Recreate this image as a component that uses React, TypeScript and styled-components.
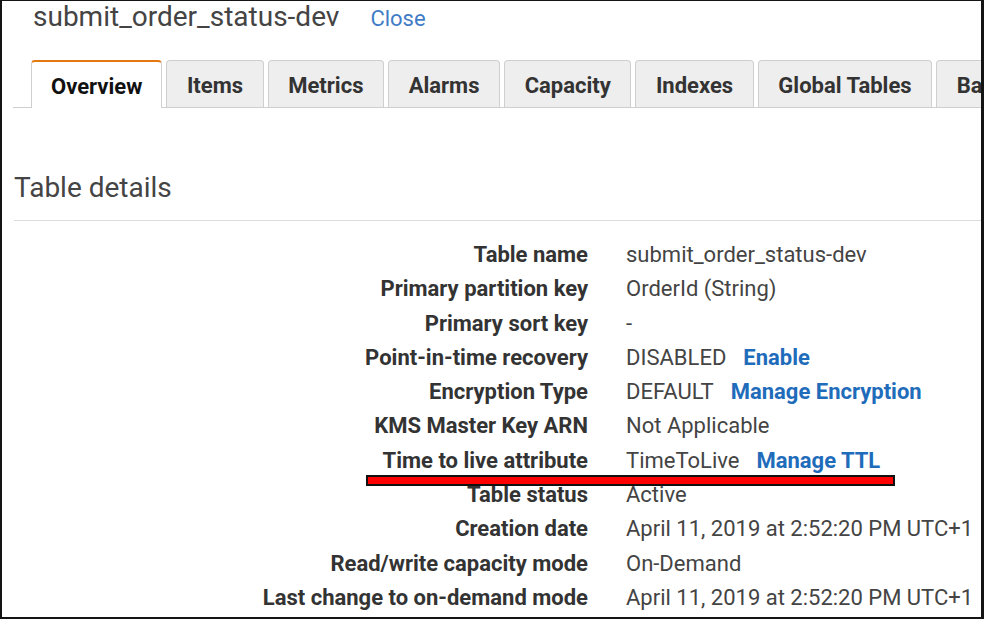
import React from 'react';
import styled, { createGlobalStyle } from 'styled-components';

const GlobalStyle = createGlobalStyle`
  html, body {
    margin: 0;
    padding: 0;
    background: #ffffff;
  }
  body {
    font-family: Roboto, 'Liberation Sans', Arial, sans-serif;
  }
`;

const Frame = styled.div`
  position: relative;
  box-sizing: border-box;
  width: 984px;
  height: 619px;
  border: 2px solid #141414;
  border-top-width: 1px;
  border-right-width: 3px;
  overflow: hidden;
  background: #fff;
`;

const Header = styled.div`
  display: flex;
  align-items: baseline;
  gap: 31px;
  height: 30px;
  padding-left: 31px;
  padding-top: 1px;
  line-height: 30px;
`;

const Title = styled.h1`
  margin: 0;
  font-size: 28px;
  font-weight: 400;
  line-height: 30px;
  color: #444;
`;

const CloseLink = styled.a`
  font-size: 22px;
  line-height: 30px;
  color: #3f7cc6;
  cursor: pointer;
`;

const Body = styled.div`
  padding-left: 11px;
`;

const TabBar = styled.div`
  display: flex;
  gap: 4px;
  margin-top: 28px;
  padding-left: 18px;
  height: 47px;
  border-bottom: 1px solid #cfcfcf;
  white-space: nowrap;
`;

const Tab = styled.div<{ active?: boolean }>`
  box-sizing: border-box;
  flex: none;
  display: flex;
  align-items: center;
  height: ${(p) => (p.active ? '48px' : '47px')};
  padding: 3px ${(p) => (p.active ? '19px' : '19.6px')} 0;
  ${(p) => (p.active ? 'padding-bottom: 1px;' : '')}
  background: ${(p) => (p.active ? '#fff' : '#eeeeee')};
  border: 1px solid #cfcfcf;
  border-bottom: none;
  border-top: ${(p) => (p.active ? '2px solid #e47911' : '1px solid #cfcfcf')};
  border-radius: 4px 4px 0 0;
  font-size: 22px;
  font-weight: 700;
  color: ${(p) => (p.active ? '#111' : '#333')};
`;

const SectionTitle = styled.h2`
  margin: 65px 0 0 1px;
  font-size: 28px;
  font-weight: 400;
  line-height: 30px;
  color: #444;
  padding-bottom: 17px;
  border-bottom: 1px solid #dcdcdc;
`;

const Details = styled.div`
  display: grid;
  grid-template-columns: 575px auto;
  column-gap: 38px;
  margin-top: 17px;
  font-size: 22px;
  line-height: 34.3px;
  white-space: nowrap;
`;

const Label = styled.div`
  text-align: right;
  font-weight: 700;
  color: #333;
`;

const Value = styled.div`
  display: flex;
  gap: 17px;
  color: #444;
`;

const Action = styled.a`
  font-weight: 700;
  color: #1f6cbb;
  cursor: pointer;
`;

const Highlight = styled.div`
  position: absolute;
  left: 364px;
  top: 474px;
  width: 529px;
  height: 11px;
  box-sizing: border-box;
  background: #ff0000;
  border: 2px solid #111;
`;

const tabs = ['Overview', 'Items', 'Metrics', 'Alarms', 'Capacity', 'Indexes', 'Global Tables', 'Backups'];

type Row = { label: string; value: string; action?: string };

const rows: Row[] = [
  { label: 'Table name', value: 'submit_order_status-dev' },
  { label: 'Primary partition key', value: 'OrderId (String)' },
  { label: 'Primary sort key', value: '-' },
  { label: 'Point-in-time recovery', value: 'DISABLED', action: 'Enable' },
  { label: 'Encryption Type', value: 'DEFAULT', action: 'Manage Encryption' },
  { label: 'KMS Master Key ARN', value: 'Not Applicable' },
  { label: 'Time to live attribute', value: 'TimeToLive', action: 'Manage TTL' },
  { label: 'Table status', value: 'Active' },
  { label: 'Creation date', value: 'April 11, 2019 at 2:52:20 PM UTC+1' },
  { label: 'Read/write capacity mode', value: 'On-Demand' },
  { label: 'Last change to on-demand mode', value: 'April 11, 2019 at 2:52:20 PM UTC+1' },
];

export default function App() {
  return (
    <>
      <GlobalStyle />
      <Frame>
        <Header>
          <Title>submit_order_status-dev</Title>
          <CloseLink>Close</CloseLink>
        </Header>
        <Body>
          <TabBar>
            {tabs.map((t, i) => (
              <Tab key={t} active={i === 0}>
                {t}
              </Tab>
            ))}
          </TabBar>
          <SectionTitle>Table details</SectionTitle>
          <Details>
            {rows.map((r) => (
              <React.Fragment key={r.label}>
                <Label>{r.label}</Label>
                <Value>
                  <span>{r.value}</span>
                  {r.action && <Action>{r.action}</Action>}
                </Value>
              </React.Fragment>
            ))}
          </Details>
        </Body>
        <Highlight />
      </Frame>
    </>
  );
}
